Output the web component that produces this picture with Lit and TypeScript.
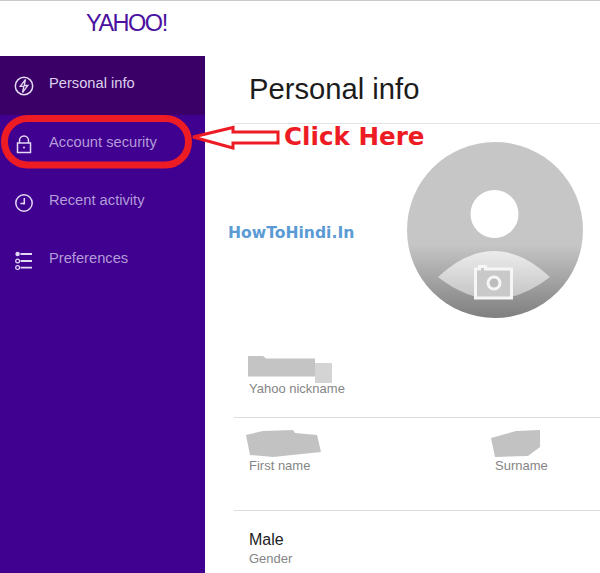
import { LitElement, html, css, svg } from "lit";
import { customElement } from "lit/decorators.js";

const icons = {
  bolt: svg`<circle cx="10" cy="10" r="8.7"/><path d="M11.5 3.5 6.2 10.4h3.6l-1.3 6.1 5.3-7h-3.6z" stroke-width="1.3"/>`,
  lock: svg`<path d="M5.5 9V6.5a4.5 4.5 0 0 1 9 0V9"/><rect x="3.5" y="9" width="13" height="9.5"/><circle cx="10" cy="13.5" r="1" fill="currentColor" stroke="none"/>`,
  clock: svg`<circle cx="10" cy="10" r="8.2"/><path d="M10.3 5v5.6H6.4"/><circle cx="10" cy="10.5" r="1" fill="currentColor" stroke="none"/>`,
  prefs: svg`<circle cx="3.6" cy="3" r="2.2" fill="currentColor" stroke="none"/><path d="M6.5 3h11.5M6.5 10h11.5M6.5 16.6h11.5" stroke-width="1.9"/><circle cx="3.6" cy="10" r="1.9" stroke-width="1.2"/><circle cx="3.6" cy="16.6" r="1.9" stroke-width="1.2"/>`,
};

@customElement("app-root")
export class AppRoot extends LitElement {
  static styles = css`
    :host {
      display: block;
      position: relative;
      width: 600px;
      height: 573px;
      overflow: hidden;
      background: #fff;
      font-family: "Liberation Sans", Arial, sans-serif;
    }
    .top {
      height: 55px;
      border-top: 1px solid #c9c9c9;
      display: flex;
      align-items: flex-start;
      padding-left: 86px;
    }
    .logo {
      color: #4b10a0;
      font-size: 23.5px;
      line-height: 44px;
      letter-spacing: -1.5px;
    }
    .logo i { font-style: normal; }
    .body { display: flex; height: 517px; }
    nav {
      width: 205px;
      flex: none;
      background: #400090;
      display: flex;
      flex-direction: column;
    }
    .item {
      height: 58.4px;
      display: flex;
      align-items: center;
      gap: 15px;
      padding-left: 14px;
      color: #b39cd9;
      font-size: 14.7px;
    }
    .item.active { background: #3b0068; color: #dccfee; height: 59px; }
    .item span { padding-bottom: 5px; }
    .item svg {
      width: 20px;
      height: 20px;
      fill: none;
      stroke: #e3d9f2;
      color: #e3d9f2;
      stroke-width: 1.5;
    }
    main { flex: 1; min-width: 0; padding-left: 29px; }
    .title {
      height: 67px;
      border-bottom: 1px solid #e3e3e3;
      padding-left: 15px;
      font-size: 29.2px;
      line-height: 67px;
      color: #1c1c1c;
    }
    .profile { height: 293px; border-bottom: 1px solid #dcdcdc; }
    .avatar-row { display: flex; justify-content: flex-end; padding: 18px 17px 38px 0; }
    .avatar { width: 176px; height: 176px; display: block; }
    .field { padding-left: 15px; }
    .blob { display: block; margin-left: -4px; }
    .blob.tight { margin-bottom: -3px; }
    .label { color: #858585; font-size: 13px; line-height: 16px; }
    .names { height: 93px; border-bottom: 1px solid #dcdcdc; display: flex; padding-top: 12px; box-sizing: border-box; }
    .names .field:first-child { width: 246px; box-sizing: border-box; }
    .gender { padding: 19px 0 0 15px; }
    .value { color: #222; font-size: 16px; line-height: 19px; margin-bottom: 2px; }
    .marks { position: absolute; left: 0; top: 0; width: 600px; height: 573px; pointer-events: none; }
    .watermark {
      position: absolute;
      left: 228px;
      top: 224px;
      color: #5b9bd5;
      font: bold 15.6px/18px "DejaVu Sans", sans-serif;
      white-space: nowrap;
    }
    .click {
      position: absolute;
      left: 284px;
      top: 123px;
      color: #ed1c24;
      font: bold 24.6px/28px "DejaVu Sans", sans-serif;
      white-space: nowrap;
    }
  `;

  private navItem(label: string, icon: keyof typeof icons, active = false) {
    return html`<div class="item ${active ? "active" : ""}">
      <svg viewBox="0 0 20 20" aria-hidden="true">${icons[icon]}</svg>
      <span>${label}</span>
    </div>`;
  }

  render() {
    return html`
      <div class="top"><div class="logo">YAHOO<i>!</i></div></div>
      <div class="body">
        <nav>
          ${this.navItem("Personal info", "bolt", true)}
          ${this.navItem("Account security", "lock")}
          ${this.navItem("Recent activity", "clock")}
          ${this.navItem("Preferences", "prefs")}
        </nav>
        <main>
          <div class="title">Personal info</div>
          <div class="profile">
            <div class="avatar-row">
              <svg class="avatar" viewBox="0 0 176 176" aria-hidden="true">
                <defs>
                  <linearGradient id="rim" x1="0" y1="0" x2="0" y2="1">
                    <stop offset="0.58" stop-color="#c6c6c6" />
                    <stop offset="1" stop-color="#7f7f7f" />
                  </linearGradient>
                  <linearGradient id="lens" x1="0" y1="0" x2="0" y2="1">
                    <stop offset="0" stop-color="#ececec" />
                    <stop offset="1" stop-color="#c4c4c4" />
                  </linearGradient>
                </defs>
                <circle cx="88" cy="88" r="88" fill="url(#rim)" />
                <circle cx="87.5" cy="72" r="24" fill="#fff" />
                <path d="M31 135 Q87 83 143 135 Q87 179 31 135Z" fill="url(#lens)" />
                <path d="M68.5 156V127h4v-2.500h6v2.500h26v29z" fill="#c9c9c9" stroke="#f6f6f6" stroke-width="3" />
                <circle cx="87" cy="141" r="6" fill="#bdbdbd" stroke="#f6f6f6" stroke-width="3" />
              </svg>
            </div>
            <div class="field">
              <svg class="blob tight" width="90" height="28" viewBox="0 0 90 28" aria-hidden="true">
                <path d="M3 0h15l3 2.500h49v18H3z" fill="#c4c4c4" />
                <path d="M70 7h17v20H70z" fill="#d4d4d4" />
              </svg>
              <div class="label">Yahoo nickname</div>
            </div>
          </div>
          <div class="names">
            <div class="field">
              <svg class="blob" width="78" height="28" viewBox="0 0 78 28" aria-hidden="true">
                <path d="M1 5 18 1 48 0l2 3 22 2 4 17-48 5-23-2z" fill="#c2c2c2" />
              </svg>
              <div class="label">First name</div>
            </div>
            <div class="field">
              <svg class="blob" width="52" height="28" viewBox="0 0 52 28" aria-hidden="true">
                <path d="M0 8l25-7 24-1v17l-12 9-33 1z" fill="#c2c2c2" />
              </svg>
              <div class="label">Surname</div>
            </div>
          </div>
          <div class="gender">
            <div class="value">Male</div>
            <div class="label">Gender</div>
          </div>
        </main>
      </div>
      <svg class="marks" viewBox="0 0 600 573" aria-hidden="true">
        <rect x="4.5" y="118.500" width="184" height="46.500" rx="23" fill="none" stroke="#ed1c24" stroke-width="7" />
        <path d="M193 137 233 127.500v4.500h45v11h-45v5z" fill="#fff" stroke="#ed1c24" stroke-width="3" />
      </svg>
      <div class="click">Click Here</div>
      <div class="watermark">HowToHindi.In</div>
    `;
  }
}
